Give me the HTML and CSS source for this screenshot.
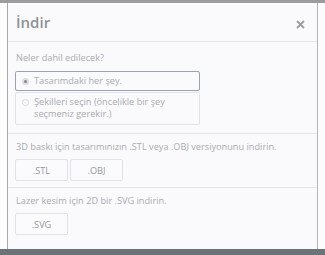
FILE: index.html
```html
<!DOCTYPE html>
<html lang="tr">
<head>
  <meta charset="UTF-8">
  <title>İndir</title>
  <link rel="stylesheet" href="styles.css">
</head>
<body>
  <div class="topbar"></div>
  <div class="page">
    <div class="dialog">
      <div class="dialog-header">
        <h1 class="title">İndir</h1>
        <svg class="close" width="9" height="9" viewBox="0 0 9 9">
          <path d="M1 1L8 8M8 1L1 8" stroke="#9a9ca0" stroke-width="1.8" fill="none"/>
        </svg>
      </div>
      <div class="section first">
        <p class="label">Neler dahil edilecek?</p>
        <div class="option selected">
          <span class="radio on"></span>
          <span>Tasarımdaki her şey.</span>
        </div>
        <div class="option">
          <span class="radio"></span>
          <span>Şekilleri seçin (öncelikle bir şey seçmeniz gerekir.)</span>
        </div>
      </div>
      <div class="section">
        <p class="label">3D baskı için tasarımınızın .STL veya .OBJ versiyonunu indirin.</p>
        <div class="buttons">
          <button class="button">.STL</button>
          <button class="button">.OBJ</button>
        </div>
      </div>
      <div class="section last">
        <p class="label">Lazer kesim için 2D bir .SVG indirin.</p>
        <div class="buttons">
          <button class="button">.SVG</button>
        </div>
      </div>
    </div>
  </div>
  <div class="bottombar"></div>
</body>
</html>
```

FILE: styles.css
```css
body {
  margin: 0;
  height: 255px;
  display: flex;
  flex-direction: column;
  background-color: #fdfdfe;
  font-family: 'Open Sans', sans-serif;
  color: #a9abb0;
  overflow: hidden;
}

.topbar {
  height: 3px;
  background-color: #9c9c9e;
}

.page {
  flex: 1;
  padding-left: 7px;
  display: flex;
}

.dialog {
  width: 309px;
  background-color: #fafafc;
  border-left: 1px solid #a9a9ad;
  border-right: 1px solid #b5b5b9;
  display: flex;
  flex-direction: column;
}

.dialog-header {
  height: 38px;
  display: flex;
  align-items: center;
  justify-content: space-between;
  padding: 0 12px 0 8px;
  border-bottom: 1px solid #e6e6ea;
}

.title {
  margin: 0;
  font-size: 15px;
  font-weight: 600;
  color: #8f9196;
}

.close {
  margin-top: 4px;
}

.section {
  padding: 7px 8px 6px 7px;
  border-bottom: 1px solid #e6e6ea;
}

.section.first {
  padding-top: 10px;
  padding-bottom: 7px;
}

.section.last {
  border-bottom: 0;
  flex: 1;
}

.label {
  margin: 0 0 6px 1px;
  font-size: 9.2px;
  line-height: 12px;
}

.first .label {
  margin-bottom: 7px;
}

.option {
  width: 171px;
  display: flex;
  gap: 5px;
  align-items: flex-start;
  padding: 3px 6px 4px;
  font-size: 9.2px;
  line-height: 12px;
  border: 1px solid #e2e2e6;
  border-radius: 2px;
  margin-bottom: 1px;
}

.option.selected {
  border-color: #9aa3b4;
  padding-bottom: 3px;
}

.radio {
  flex: none;
  width: 7px;
  height: 7px;
  margin-top: 3px;
  border: 1px solid #d8d8dc;
  border-radius: 50%;
  box-sizing: border-box;
}

.radio.on {
  border: 2px solid #dcdce0;
  background-color: #86888c;
}

.buttons {
  display: flex;
  gap: 2px;
}

.button {
  width: 53px;
  height: 22px;
  padding: 0;
  border: 1px solid #e2e2e6;
  border-radius: 2px;
  background-color: #fbfbfd;
  font-family: 'Open Sans', sans-serif;
  font-size: 9.2px;
  color: #96989d;
  cursor: pointer;
}

.bottombar {
  height: 6px;
  background-color: #6b7378;
}
```
